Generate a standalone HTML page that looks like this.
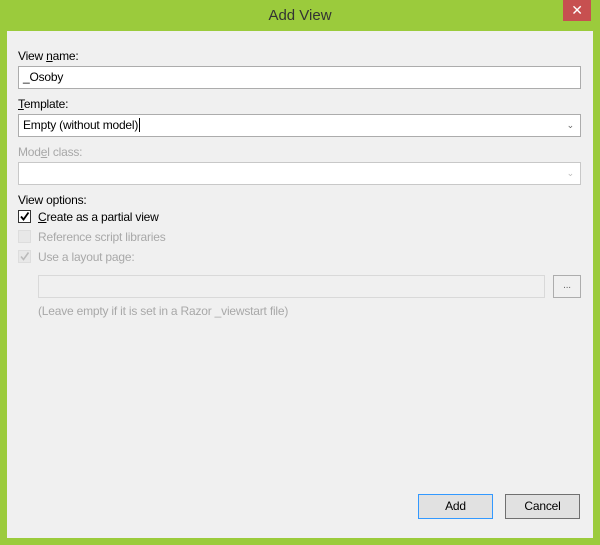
<!DOCTYPE html>
<html><head><style>
*{box-sizing:border-box;margin:0;padding:0}
body{width:600px;height:545px;background:#9bcb3c;font-family:"Liberation Sans",sans-serif;font-size:12px;letter-spacing:-0.2px;color:#000;position:relative;overflow:hidden}
.title{position:absolute;left:0;top:0;width:600px;height:31px;text-align:center;line-height:31px;font-size:15px;color:#333;letter-spacing:0}
.close{position:absolute;left:563px;top:0;width:28px;height:21px;background:#c75050;color:#fff;text-align:center;line-height:21px;font-size:14px}
.client{position:absolute;left:7px;top:31px;width:586px;height:507px;background:#f0f0f0}
.a{position:absolute}
.lbl{position:absolute;left:18px;line-height:14px}
.inp{position:absolute;left:18px;width:563px;height:23px;background:#fff;border:1px solid #acacac;padding-left:4px;line-height:21px}
.arr{position:absolute;right:6px;top:0;font-size:9px;color:#666}
.cb{position:absolute;left:18px;width:13px;height:13px;border:1px solid #333;background:#fff}
.cb.d{border-color:#ddd;background:#e8e8e8}
.btn{position:absolute;top:494px;width:75px;height:25px;background:#e1e1e1;border:1px solid #adadad;text-align:center;line-height:23px}
.g{color:#a8a8a8}
.caret{display:inline-block;width:1px;height:14px;background:#000;vertical-align:-3px;margin-left:1px}
</style></head><body>
<div class="title">Add View</div>
<div class="close">✕</div>
<div class="client"></div>
<div class="lbl" style="top:49px">View <u>n</u>ame:</div>
<div class="inp" style="top:66px">_Osoby</div>
<div class="lbl" style="top:97px"><u>T</u>emplate:</div>
<div class="inp" style="top:114px">Empty (without model)<span class="caret"></span><span class="arr">⌄</span></div>
<div class="lbl g" style="top:145px">Mod<u>e</u>l class:</div>
<div class="inp" style="top:162px;border-color:#c8c8c8"><span class="arr" style="color:#bbb">⌄</span></div>
<div class="lbl" style="top:193px">View options:</div>
<div class="cb" style="top:210px"><svg width="11" height="11" style="position:absolute;left:0;top:0"><path d="M2 5.5L4.5 8.5L9.5 1.5" stroke="#000" stroke-width="1.8" fill="none"/></svg></div>
<div class="lbl" style="left:38px;top:210px"><u>C</u>reate as a partial view</div>
<div class="cb d" style="top:230px"></div>
<div class="lbl g" style="left:38px;top:230px">Reference script libraries</div>
<div class="cb d" style="top:250px"><svg width="11" height="11" style="position:absolute;left:0;top:0"><path d="M2 5.5L4.5 8.5L9.5 1.5" stroke="#bbb" stroke-width="1.6" fill="none"/></svg></div>
<div class="lbl g" style="left:38px;top:250px">Use a layout page:</div>
<div class="a" style="left:38px;top:275px;width:507px;height:23px;background:#f0f0f0;border:1px solid #d9d9d9"></div>
<div class="a" style="left:553px;top:275px;width:28px;height:23px;border:1px solid #adadad;text-align:center;line-height:19px;font-size:10px;color:#666">...</div>
<div class="lbl g" style="left:38px;top:304px">(Leave empty if it is set in a Razor _viewstart file)</div>
<div class="btn" style="left:418px;border-color:#3399ff">Add</div>
<div class="btn" style="left:505px;border-color:#707070">Cancel</div>
</body></html>
